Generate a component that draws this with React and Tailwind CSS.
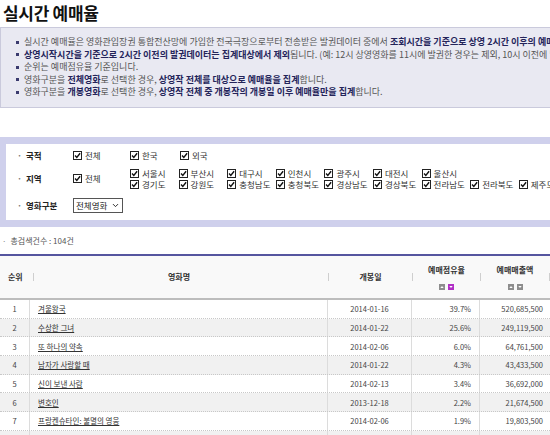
import { ChevronDown } from 'lucide-react';

const infoLines = [
  [
    ['실시간 예매율은 영화관입장권 통합전산망에 가입한 전국극장으로부터 전송받은 발권데이터 중에서 ', false],
    ['조회시간을 기준으로 상영 2시간 이후의 예매데이터', true],
    ['를 기준으로 집계합니다.', false],
  ],
  [
    ['상영시작시간을 기준으로 2시간 이전의 발권데이터는 집계대상에서 제외', true],
    ['됩니다. (예: 12시 상영영화를 11시에 발권한 경우는 제외, 10시 이전에 발권한 경우는 포함)', false],
  ],
  [['순위는 예매점유율 기준입니다.', false]],
  [
    ['영화구분을 ', false],
    ['전체영화', true],
    ['로 선택한 경우, ', false],
    ['상영작 전체를 대상으로 예매율을 집계', true],
    ['합니다.', false],
  ],
  [
    ['영화구분을 ', false],
    ['개봉영화', true],
    ['로 선택한 경우, ', false],
    ['상영작 전체 중 개봉작의 개봉일 이후 예매율만을 집계', true],
    ['합니다.', false],
  ],
];

const regionsTop = ['서울시', '부산시', '대구시', '인천시', '광주시', '대전시', '울산시'];
const regionsBottom = ['경기도', '강원도', '충청남도', '충청북도', '경상남도', '경상북도', '전라남도', '전라북도', '제주도'];

const movies = [
  [1, '겨울왕국', '2014-01-16', '39.7%', '520,685,500'],
  [2, '수상한 그녀', '2014-01-22', '25.6%', '249,119,500'],
  [3, '또 하나의 약속', '2014-02-06', '6.0%', '64,761,500'],
  [4, '남자가 사랑할 때', '2014-01-22', '4.3%', '43,433,500'],
  [5, '신이 보낸 사람', '2014-02-13', '3.4%', '36,692,000'],
  [6, '변호인', '2013-12-18', '2.2%', '21,674,500'],
  [7, '프랑켄슈타인: 불멸의 영웅', '2014-02-06', '1.9%', '19,803,500'],
  [8, '수상한 그녀', '2014-01-22', '1.5%', '15,110,000'],
];

function Check({ label }) {
  return (
    <span className="flex items-center gap-[3px]">
      <span className="w-[9px] h-[9px] border border-[#222] bg-white flex items-center justify-center shrink-0">
        <svg viewBox="0 0 8 8" className="w-[7px] h-[7px]">
          <path d="M1.2 4 L3.2 6.2 L7 1.4" fill="none" stroke="#111" strokeWidth="1.6" />
        </svg>
      </span>
      <span>{label}</span>
    </span>
  );
}

function SortIcon({ dir, on }) {
  return (
    <span className={`w-[6px] h-[6px] flex items-center justify-center ${on ? 'bg-[#b12fc6]' : 'bg-[#8d8d8d]'}`}>
      <svg viewBox="0 0 6 6" className="w-[4px] h-[4px]">
        {dir === 'up'
          ? <path d="M0.5 4.5 L3 1.5 L5.5 4.5 Z" fill="#fff" />
          : <path d="M0.5 1.5 L3 4.5 L5.5 1.5 Z" fill="#fff" />}
      </svg>
    </span>
  );
}

function Bar() {
  return <span className="w-px h-[8px] bg-[#cfcfcf] shrink-0" />;
}

function Label({ children }) {
  return (
    <div className="w-[67px] pl-[11px] flex items-center gap-[4px] font-bold text-[8.5px] text-[#222]">
      <span className="text-[#777]">·</span>{children}
    </div>
  );
}

export default function App() {
  return (
    <div className="w-[550px] h-[435px] overflow-hidden bg-white whitespace-nowrap font-['Noto_Sans_CJK_KR','Noto_Sans',sans-serif] text-[#555]">
      {/* Title */}
      <div className="h-[27px] pl-[3px] pt-[2px]">
        <h1 className="text-[17px] font-bold text-[#111] leading-[22px] tracking-[-0.3px]">실시간 예매율</h1>
      </div>

      {/* Notice box */}
      <div className="w-[620px] h-[81px] bg-[#e9e9f2] border border-[#cacadc] pt-[8px] pl-[15px] text-[9px] leading-[12.5px]">
        {infoLines.map((line, i) => (
          <div key={i} className="flex items-center">
            <span className="w-[3px] h-[3px] bg-[#3a3a6e] mr-[5px] shrink-0" />
            <span>
              {line.map(([t, b], j) => (
                <span key={j} className={b ? 'font-bold text-[#24245a]' : ''}>{t}</span>
              ))}
            </span>
          </div>
        ))}
      </div>

      {/* Filter box */}
      <div className="mt-[29px] w-[620px] h-[90px] border-y-[7px] border-l-[6px] border-[#cfd0ec] bg-white pt-[5px] text-[8.5px] text-[#333]">
        <div className="flex h-[13px] items-center">
          <Label>국적</Label>
          <div className="w-[57px]"><Check label="전체" /></div>
          <div className="w-[50px]"><Check label="한국" /></div>
          <div><Check label="외국" /></div>
        </div>

        <div className="flex h-[23px] items-center mt-[5px]">
          <Label>지역</Label>
          <div className="w-[57px]"><Check label="전체" /></div>
          <div className="grid grid-cols-[repeat(9,48.6px)] grid-rows-[11px_11px] items-center">
            {regionsTop.map((r) => <Check key={r} label={r} />)}
            <span /><span />
            {regionsBottom.map((r) => <Check key={r} label={r} />)}
          </div>
        </div>

        <div className="flex h-[15px] items-center mt-[8px]">
          <Label>영화구분</Label>
          <div className="w-[50px] h-[15px] border border-[#555] flex items-center justify-between pl-[2px] pr-[2px] text-[#222]">
            <span>전체영화</span>
            <ChevronDown className="w-[9px] h-[9px] text-[#222]" strokeWidth={2.5} />
          </div>
        </div>
      </div>

      {/* Count */}
      <div className="mt-[8px] h-[12px] flex items-center pl-[2px] text-[8px] text-[#555]">
        <span className="text-[#888] mr-[4px]">·</span>총검색건수 : 104건
      </div>

      {/* Table */}
      <div className="mt-[7px] w-[550px] text-[7.5px] text-[#444]">
        <div className="grid grid-cols-[30px_298px_84px_68px_70px] h-[46px] border-t-2 border-t-[#55559f] border-b-2 border-b-[#bdbdbd] bg-[#f9f9f9] font-bold text-[#333] text-[8px]">
          <div className="flex items-center pl-[8px]">순위</div>
          <div className="flex items-center pl-[3px]">
            <Bar />
            <span className="flex-1 text-center pr-[4px]">영화명</span>
          </div>
          <div className="flex items-center">
            <Bar />
            <span className="flex-1 text-center">개봉일</span>
          </div>
          <div className="flex items-center">
            <Bar />
            <span className="flex-1 flex flex-col items-center gap-[9px] pt-[1px]">
              <span className="leading-[10px]">예매점유율</span>
              <span className="flex gap-[3px]"><SortIcon dir="up" /><SortIcon dir="down" on /></span>
            </span>
          </div>
          <div className="flex items-center">
            <Bar />
            <span className="flex-1 flex flex-col items-center gap-[9px] pt-[1px]">
              <span className="leading-[10px]">예매매출액</span>
              <span className="flex gap-[3px]"><SortIcon dir="up" /><SortIcon dir="down" /></span>
            </span>
            <Bar />
          </div>
        </div>

        {movies.map(([rank, name, date, share, sales]) => (
          <div
            key={rank}
            className={`grid grid-cols-[30px_298px_84px_68px_70px] h-[18.7px] border-b border-dotted border-[#c8c8c8] ${rank % 2 === 0 ? 'bg-[#f1f1f1]' : 'bg-white'}`}
          >
            <div className="flex items-center justify-center border-r border-[#dcdcdc]">{rank}</div>
            <div className="flex items-center pl-[8px] border-r border-[#dcdcdc]">
              <span className="underline underline-offset-[1px] text-[#333]">{name}</span>
            </div>
            <div className="flex items-center justify-center border-r border-[#dcdcdc]">{date}</div>
            <div className="flex items-center justify-end pr-[8px] border-r border-[#dcdcdc]">{share}</div>
            <div className="flex items-center justify-end pr-[7px]">{sales}</div>
          </div>
        ))}
      </div>
    </div>
  );
}
